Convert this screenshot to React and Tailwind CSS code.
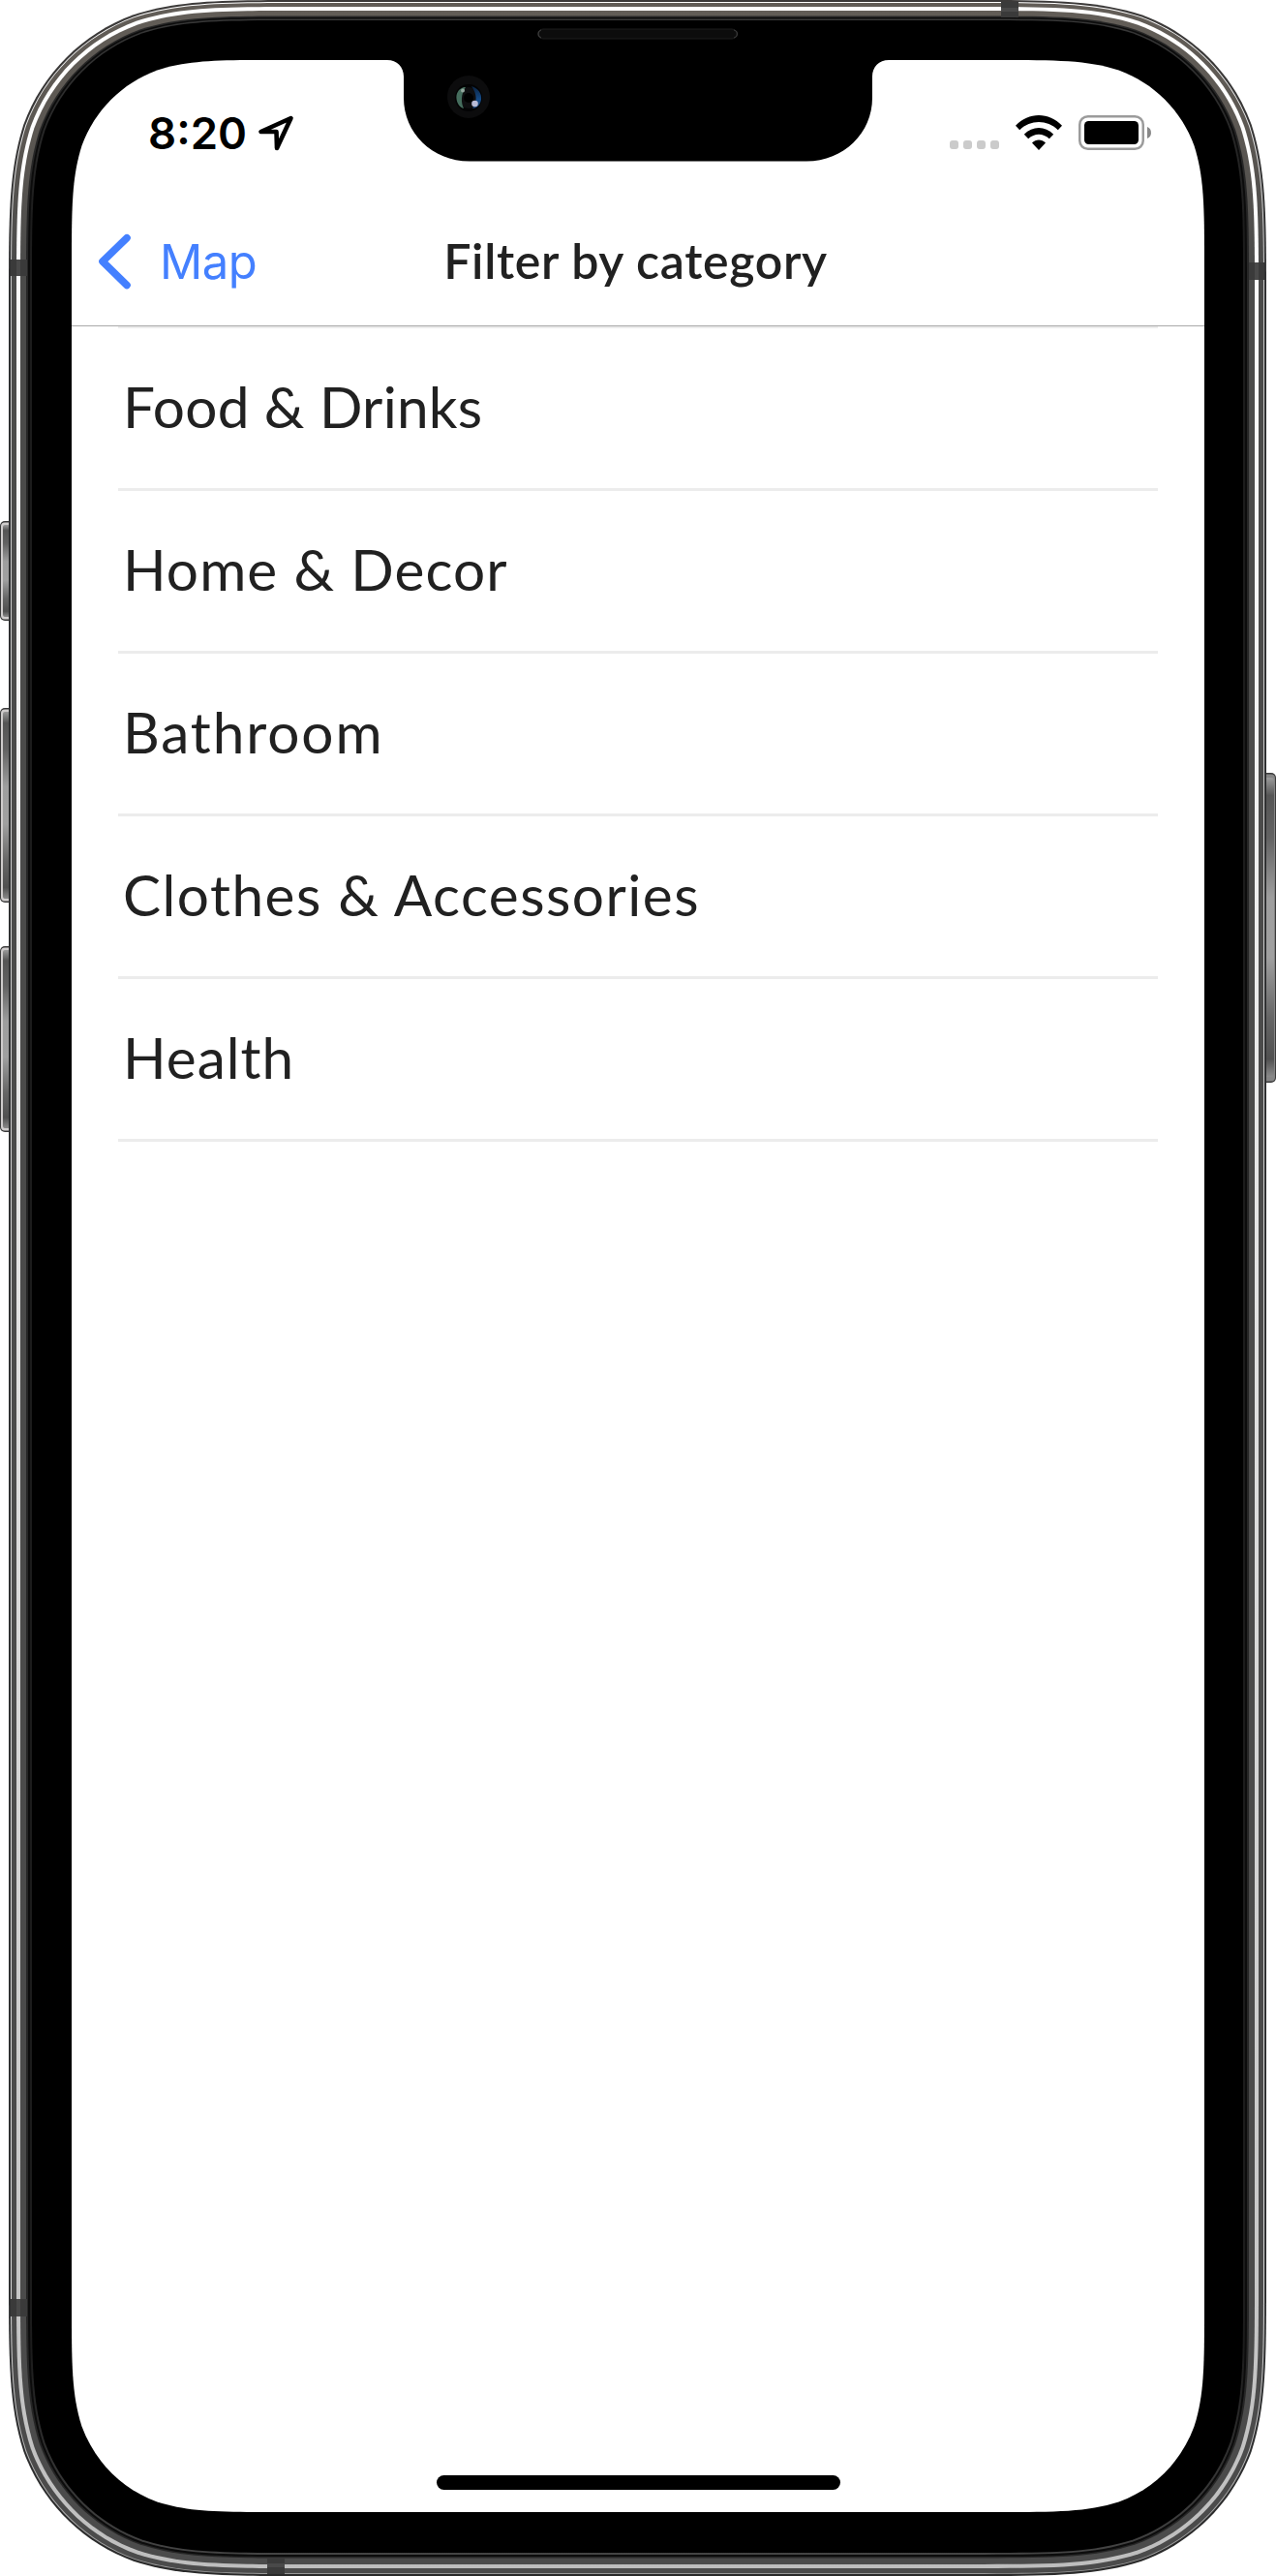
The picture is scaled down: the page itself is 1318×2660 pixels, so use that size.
import React from "react";

// Rounded rectangle with continuous (squircle-like) corners.
function squircle(l, t, r, b, c) {
  const [p, q, s, u, v, w, z] = [1.528665, 1.08849, 0.868407, 0.631494, 0.372824, 0.16906, 0.074911].map((k) => k * c);
  return [
    `M${l + p} ${t}H${r - p}`,
    `C${r - q} ${t} ${r - s} ${t} ${r - u} ${t + z}`,
    `C${r - v} ${t + w} ${r - w} ${t + v} ${r - z} ${t + u}`,
    `C${r} ${t + s} ${r} ${t + q} ${r} ${t + p}`,
    `V${b - p}`,
    `C${r} ${b - q} ${r} ${b - s} ${r - z} ${b - u}`,
    `C${r - w} ${b - v} ${r - v} ${b - w} ${r - u} ${b - z}`,
    `C${r - s} ${b} ${r - q} ${b} ${r - p} ${b}`,
    `H${l + p}`,
    `C${l + q} ${b} ${l + s} ${b} ${l + u} ${b - z}`,
    `C${l + v} ${b - w} ${l + w} ${b - v} ${l + z} ${b - u}`,
    `C${l} ${b - s} ${l} ${b - q} ${l} ${b - p}`,
    `V${t + p}`,
    `C${l} ${t + q} ${l} ${t + s} ${l + z} ${t + u}`,
    `C${l + w} ${t + v} ${l + v} ${t + w} ${l + u} ${t + z}`,
    `C${l + s} ${t} ${l + q} ${t} ${l + p} ${t}Z`,
  ].join("");
}

const frameLayers = [
  { box: [9, 0, 1308, 2660, 204], fill: "url(#edge)" },
  { box: [11, 2, 1306, 2658, 202], fill: "url(#rim)" },
  { box: [12, 3, 1305, 2657, 201], fill: "url(#steel)" },
  { box: [17, 7, 1300, 2652, 196], fill: "url(#shine)" },
  { box: [21, 11, 1296, 2648, 192], fill: "url(#steel)" },
  { box: [27, 16.5, 1290, 2641.5, 186], fill: "#262626" },
  { box: [29, 18, 1288, 2640, 184], fill: "#0c0c0c" },
  { box: [31, 19.5, 1286, 2638, 182], fill: "url(#lip)" },
  { box: [33, 21, 1284, 2636, 180], fill: "#000" },
];

const sideButtons = [
  [538, 103],
  [731, 201],
  [977, 192],
];

const antennaBands = [
  { x: 11, y: 268, w: 17, h: 17, side: true },
  { x: 11, y: 2374, w: 17, h: 18, side: true },
  { x: 1034, y: 2, w: 18, h: 16, side: false },
  { x: 1290, y: 271, w: 16, h: 18, side: true },
  { x: 276, y: 2641, w: 18, h: 17, side: false },
];

function DeviceFrame() {
  return (
    <svg className="absolute inset-0" width="1318" height="2660" viewBox="0 0 1318 2660" aria-hidden="true">
      <defs>
        <linearGradient id="edge" x1="0" y1="0" x2="0" y2="1">
          <stop offset="0" stopColor="#3c3a39" />
          <stop offset="0.12" stopColor="#2f3031" />
          <stop offset="0.9" stopColor="#303132" />
          <stop offset="1" stopColor="#2a2a2a" />
        </linearGradient>
        <linearGradient id="rim" x1="0" y1="0" x2="0" y2="1">
          <stop offset="0" stopColor="#fff" />
          <stop offset="0.1" stopColor="#c8c8c8" />
          <stop offset="0.9" stopColor="#d8d8d8" />
          <stop offset="1" stopColor="#999" />
        </linearGradient>
        <linearGradient id="steel" x1="0" y1="0" x2="0" y2="1">
          <stop offset="0" stopColor="#625d57" />
          <stop offset="0.05" stopColor="#5b5752" />
          <stop offset="0.1" stopColor="#4b4b4a" />
          <stop offset="1" stopColor="#4b4b4b" />
        </linearGradient>
        <linearGradient id="shine" x1="0" y1="0" x2="0" y2="1">
          <stop offset="0" stopColor="#fff" />
          <stop offset="0.25" stopColor="#f5f5f5" />
          <stop offset="0.45" stopColor="#e6e6e6" />
          <stop offset="0.88" stopColor="#c8c8c8" />
          <stop offset="1" stopColor="#bebebe" />
        </linearGradient>
        <linearGradient id="lip" x1="0" y1="0" x2="0" y2="1">
          <stop offset="0" stopColor="#383838" />
          <stop offset="0.08" stopColor="#1c1c1c" />
          <stop offset="0.92" stopColor="#1c1c1c" />
          <stop offset="1" stopColor="#444" />
        </linearGradient>
        <linearGradient id="button" x1="0" y1="0" x2="0" y2="1">
          <stop offset="0" stopColor="#9a9a9a" />
          <stop offset="0.06" stopColor="#555" />
          <stop offset="0.2" stopColor="#626262" />
          <stop offset="0.4" stopColor="#9e9e9e" />
          <stop offset="0.6" stopColor="#a0a0a0" />
          <stop offset="0.8" stopColor="#666" />
          <stop offset="0.94" stopColor="#505050" />
          <stop offset="1" stopColor="#8a8a8a" />
        </linearGradient>
        <linearGradient id="lensBlue" x1="0" y1="0" x2="0" y2="1">
          <stop offset="0" stopColor="#0b2340" />
          <stop offset="0.6" stopColor="#154b88" />
          <stop offset="1" stopColor="#1a3f70" />
        </linearGradient>
      </defs>

      {sideButtons.map(([y, h]) => (
        <g key={y}>
          <rect x="0" y={y} width="20" height={h} rx="5" fill="#3a3a3a" />
          <rect x="1" y={y + 1.5} width="18" height={h - 3} rx="4" fill="#cfcccc" />
          <rect x="3" y={y + 4} width="16" height={h - 8} rx="2" fill="url(#button)" />
        </g>
      ))}
      <rect x="1298" y="798" width="20" height="320" rx="5" fill="#3a3a3a" />
      <rect x="1298" y="799.5" width="19" height="317" rx="4" fill="#858585" />
      <rect x="1298" y="803" width="18" height="309" rx="3" fill="url(#button)" />

      {frameLayers.map(({ box, fill }) => (
        <path key={box[0]} d={squircle(...box)} fill={fill} />
      ))}
      {antennaBands.map(({ x, y, w, h, side }) => (
        <g key={`${x}-${y}`}>
          <rect x={x} y={y} width={w} height={h} fill="#3a3a3a" />
          {side ? (
            <rect x={x + 6} y={y} width="4" height={h} fill="#494949" />
          ) : (
            <rect x={x} y={y + 6} width={w} height="4" fill="#494949" />
          )}
        </g>
      ))}

      <path d={squircle(74, 62, 1244, 2594, 140)} fill="#fff" />
      <path d="M398 61V62H400C410 62 417 69 417 79V101C417 137 446 166.500 485 166.500H833C872 166.500 901 137 901 101V79C901 69 908 62 918 62H920V61Z" fill="#000" />

      <rect x="556" y="30" width="205" height="10" rx="5" fill="#0c0c0c" stroke="#1c1c1c" />
      <path d="M559 31Q556 32 556 35T559 39M758 31Q761.500 32 761.500 35T758 39" fill="none" stroke="#3a3a3a" strokeWidth="1.200" />

      <circle cx="484" cy="100" r="22" fill="#0c0c0d" />
      <circle cx="484" cy="101" r="14" fill="#030304" />
      <circle cx="484" cy="101" r="11" fill="#0e0e10" />
      <path d="M479 90C473 92 471 97 471.500 102C472 107 475 111 479 112C476 106 476 97 481 90Z" fill="#456d5d" />
      <path d="M487 89C494 91 498 97 497 103C496 109 492 112 488 112C493 105 493 97 487 89Z" fill="url(#lensBlue)" />
      <circle cx="484" cy="101" r="5" fill="#000" />
      <circle cx="478" cy="93.500" r="2" fill="#94a89e" />
      <circle cx="490.500" cy="107" r="3.300" fill="#b9bbd6" />
    </svg>
  );
}

function StatusBar() {
  return (
    <div className="flex h-[141px] items-center justify-between pl-[79px] pr-[55px] pt-[9px] text-black">
      <div className="flex items-center">
        <span className="mt-px w-[101px] font-['Inter',sans-serif] text-[45.5px] font-semibold leading-[60px]">8:20</span>
        <svg className="ml-[11px]" width="40" height="40" viewBox="265 117.500 40 40" fill="none" stroke="#000" strokeWidth="4.600" strokeLinejoin="round" aria-hidden="true">
          <path d="M300.500 122.500L269.500 136.500H285.500L286 153.500Z" />
        </svg>
      </div>
      <div className="flex items-center">
        <div className="mt-[25px] flex gap-[5px]">
          {[0, 1, 2, 3].map((n) => (
            <span key={n} className="size-[9px] rounded-[3px] bg-[#cbcbcb]" />
          ))}
        </div>
        <svg className="ml-[17px]" width="48" height="36" viewBox="0 0 48 36" aria-hidden="true">
          <path d="M0 10.800C13.500 -3.600 34.500 -3.600 48 10.800L43.800 15.200C32.500 4.300 15.500 4.300 4.200 15.200Z" />
          <path d="M8.800 19.800C17.500 10.800 30.500 10.800 39.200 19.800L34.800 24.200C28.500 18.200 19.500 18.200 13.200 24.200Z" />
          <path d="M17 28.500C21 24.600 27 24.600 31 28.500L24 36Z" />
        </svg>
        <svg className="ml-[17px]" width="75" height="36" viewBox="0 0 75 36" aria-hidden="true">
          <rect x="1.250" y="1.250" width="65.500" height="33.500" rx="8.500" fill="none" stroke="#9b9b9b" strokeWidth="2.500" />
          <rect x="6" y="6" width="56" height="24" rx="4.500" fill="#000" />
          <path d="M71 12C76.300 13.500 76.300 22.500 71 24Z" fill="#888" />
        </svg>
      </div>
    </div>
  );
}

function NavigationBar() {
  return (
    <header className="grid h-[134px] grid-cols-[1fr_auto_1fr] items-center border-b border-[#a9a9a9]">
      <button type="button" className="flex items-center pl-[26px] text-left text-[#4480ff]">
        <svg width="38" height="60" viewBox="0 0 38 60" fill="none" stroke="currentColor" strokeWidth="7.600" strokeLinecap="round" strokeLinejoin="round" aria-hidden="true">
          <path d="M31 5.700L6 30L31 54.500" />
        </svg>
        <span className="ml-[27px] mt-[3px] font-['Inter',sans-serif] text-[49px] leading-[60px] tracking-[-0.5px]">Map</span>
      </button>
      <h1 className="mb-[2px] mr-[5px] font-['Lato',sans-serif] text-[50px] font-semibold leading-[60px] tracking-[0.68px] text-[#212121]">Filter by category</h1>
    </header>
  );
}

const categories = [
  { name: "Food & Drinks", tracking: "tracking-[0.25px]" },
  { name: "Home & Decor", tracking: "tracking-[1.1px]" },
  { name: "Bathroom", tracking: "tracking-[1.9px]" },
  { name: "Clothes & Accessories", tracking: "tracking-[1.48px]" },
  { name: "Health", tracking: "tracking-[1px]" },
];

function CategoryList() {
  return (
    <ul className="mx-[48px] border-t-2 border-[#ececec]">
      {categories.map(({ name, tracking }) => (
        <li key={name} className="flex h-[168px] items-center border-b-[3px] border-[#ececec] pb-[6px] pl-[5px]">
          <span className={`font-['Lato',sans-serif] text-[58.5px] leading-[72px] text-[#212121] ${tracking}`}>{name}</span>
        </li>
      ))}
    </ul>
  );
}

export default function App() {
  return (
    <div className="relative h-[2660px] w-[1318px] overflow-hidden bg-white">
      <DeviceFrame />
      <main className="relative mx-[74px] flex h-[2594px] flex-col pt-[62px]">
        <StatusBar />
        <NavigationBar />
        <CategoryList />
        <div className="mx-auto mb-[23px] mt-auto h-[15px] w-[417px] rounded-full bg-black" />
      </main>
    </div>
  );
}
